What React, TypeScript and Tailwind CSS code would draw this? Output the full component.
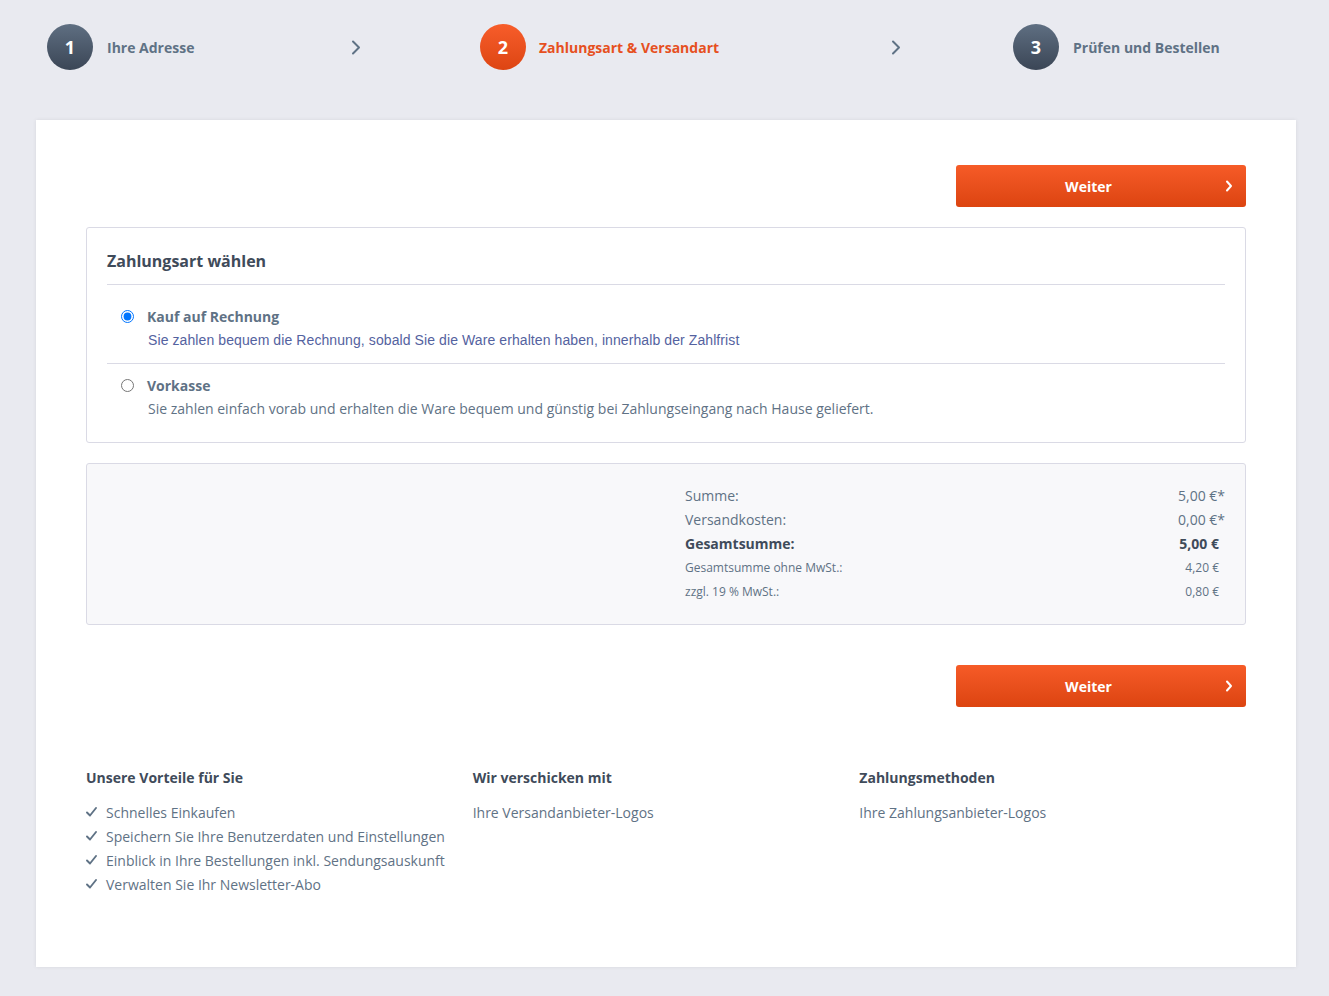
import React from "react";

const font = { fontFamily: "'Open Sans', 'Noto Sans', sans-serif" };

function Chevron({ className = "" }: { className?: string }) {
  return (
    <svg width="10" height="15" viewBox="0 0 10 15" className={className} fill="none">
      <polyline points="2,1.5 8,7.5 2,13.5" stroke="currentColor" strokeWidth="2" strokeLinecap="round" strokeLinejoin="round" />
    </svg>
  );
}

function WeiterButton() {
  return (
    <div className="flex justify-end">
      <button className="w-[290px] h-[42px] rounded-[3px] bg-gradient-to-b from-[#f65b27] to-[#dc4410] text-white flex items-center pr-[13px]">
        <span className="flex-1 text-center text-[14px] font-bold pr-[4px]">Weiter</span>
        <svg width="8" height="12" viewBox="0 0 8 12" fill="none">
          <polyline points="2,1.5 6,6 2,10.5" stroke="white" strokeWidth="2" strokeLinecap="round" strokeLinejoin="round" />
        </svg>
      </button>
    </div>
  );
}

function Check() {
  return (
    <svg width="11" height="10" viewBox="0 0 11 10" fill="none" className="shrink-0">
      <polyline points="1,5.5 4,8.5 10,1" stroke="#5f7285" strokeWidth="1.9" strokeLinecap="round" strokeLinejoin="round" />
    </svg>
  );
}

export default function App() {
  return (
    <div className="min-h-screen bg-[#e9eaf0] text-[#5f7285]" style={font}>
      {/* Steps */}
      <div className="flex items-center pt-[24px] pl-[47px]">
        <div className="w-[433px]">
          <div className="w-[314px] flex items-center">
            <div className="w-[46px] h-[46px] rounded-full bg-gradient-to-b from-[#5f6f82] to-[#3b4656] text-white font-bold text-[18px] flex items-center justify-center">1</div>
            <span className="ml-[14px] text-[14px] font-bold text-[#5f7285]">Ihre Adresse</span>
            <Chevron className="ml-auto text-[#5f7285]" />
          </div>
        </div>
        <div className="w-[533px]">
          <div className="w-[421px] flex items-center">
            <div className="w-[46px] h-[46px] rounded-full bg-gradient-to-b from-[#f75d2a] to-[#dd4512] text-white font-bold text-[18px] flex items-center justify-center">2</div>
            <span className="ml-[13px] text-[14px] font-bold text-[#e6501f]">Zahlungsart &amp; Versandart</span>
            <Chevron className="ml-auto text-[#5f7285]" />
          </div>
        </div>
        <div className="flex items-center">
          <div className="w-[46px] h-[46px] rounded-full bg-gradient-to-b from-[#5f6f82] to-[#3b4656] text-white font-bold text-[18px] flex items-center justify-center">3</div>
          <span className="ml-[14px] text-[14px] font-bold text-[#5f7285]">Prüfen und Bestellen</span>
        </div>
      </div>

      {/* Panel */}
      <div className="mt-[50px] ml-[36px] mr-[33px] bg-white shadow-[0_0_4px_rgba(0,0,0,0.08)] px-[50px] pt-[45px] pb-[71px]">
        <WeiterButton />

        {/* Payment method */}
        <div className="mt-[20px] border border-[#dadae5] rounded-[3px] px-[20px] pb-[23px]">
          <div className="pt-[21px] pb-[11px] border-b border-[#dadae5] text-[16px] leading-[24px] font-bold text-[#3f4b5a]">
            Zahlungsart wählen
          </div>
          <div className="pl-[14px] pt-[21px] pb-[13px] border-b border-[#dadae5]">
            <div className="flex items-center h-[20px]">
              <input type="radio" checked readOnly className="m-0 w-[13px] h-[13px]" />
              <span className="ml-[13px] text-[14px] font-bold text-[#5f7285]">Kauf auf Rechnung</span>
            </div>
            <div className="pl-[27px] text-[14px] leading-[20px] mt-[4px] text-[#5462a0] tracking-[0.09px]" style={{ fontFamily: "'Liberation Sans', Arial, sans-serif" }}>
              Sie zahlen bequem die Rechnung, sobald Sie die Ware erhalten haben, innerhalb der Zahlfrist
            </div>
          </div>
          <div className="pl-[14px] pt-[11px]">
            <div className="flex items-center h-[20px]">
              <input type="radio" readOnly className="m-0 w-[13px] h-[13px]" />
              <span className="ml-[13px] text-[14px] font-bold text-[#5f7285]">Vorkasse</span>
            </div>
            <div className="pl-[27px] text-[14px] leading-[20px] mt-[4px] text-[#5f7285]">
              Sie zahlen einfach vorab und erhalten die Ware bequem und günstig bei Zahlungseingang nach Hause geliefert.
            </div>
          </div>
        </div>

        {/* Summary */}
        <div className="mt-[20px] border border-[#dadae5] rounded-[3px] bg-[#f8f8fa] pt-[19px] pb-[21px] flex justify-end pr-[20px]">
          <div className="w-[540px]">
            <div className="flex justify-between h-[24px] items-center text-[14px]">
              <span>Summe:</span>
              <span>5,00 €*</span>
            </div>
            <div className="flex justify-between h-[24px] items-center text-[14px]">
              <span>Versandkosten:</span>
              <span>0,00 €*</span>
            </div>
            <div className="flex justify-between h-[24px] items-center text-[14px] font-bold text-[#3f4b5a]">
              <span>Gesamtsumme:</span>
              <span className="pr-[6px]">5,00 €</span>
            </div>
            <div className="flex justify-between h-[24px] items-center text-[12px] pt-[1px]">
              <span>Gesamtsumme ohne MwSt.:</span>
              <span className="pr-[6px]">4,20 €</span>
            </div>
            <div className="flex justify-between h-[24px] items-center text-[12px] pt-[1px]">
              <span>zzgl. 19 % MwSt.:</span>
              <span className="pr-[6px]">0,80 €</span>
            </div>
          </div>
        </div>

        <div className="mt-[40px]">
          <WeiterButton />
        </div>

        {/* Footer */}
        <div className="mt-[61px] grid grid-cols-3 text-[14px]">
          <div>
            <div className="leading-[20px] font-bold text-[#3f4b5a]">Unsere Vorteile für Sie</div>
            <div className="mt-[12px]">
              {[
                "Schnelles Einkaufen",
                "Speichern Sie Ihre Benutzerdaten und Einstellungen",
                "Einblick in Ihre Bestellungen inkl. Sendungsauskunft",
                "Verwalten Sie Ihr Newsletter-Abo",
              ].map((t) => (
                <div key={t} className="flex items-center h-[24px]">
                  <Check />
                  <span className="ml-[9px]">{t}</span>
                </div>
              ))}
            </div>
          </div>
          <div>
            <div className="leading-[20px] font-bold text-[#3f4b5a]">Wir verschicken mit</div>
            <div className="mt-[12px] h-[24px] flex items-center">Ihre Versandanbieter-Logos</div>
          </div>
          <div>
            <div className="leading-[20px] font-bold text-[#3f4b5a]">Zahlungsmethoden</div>
            <div className="mt-[12px] h-[24px] flex items-center">Ihre Zahlungsanbieter-Logos</div>
          </div>
        </div>
      </div>
    </div>
  );
}
